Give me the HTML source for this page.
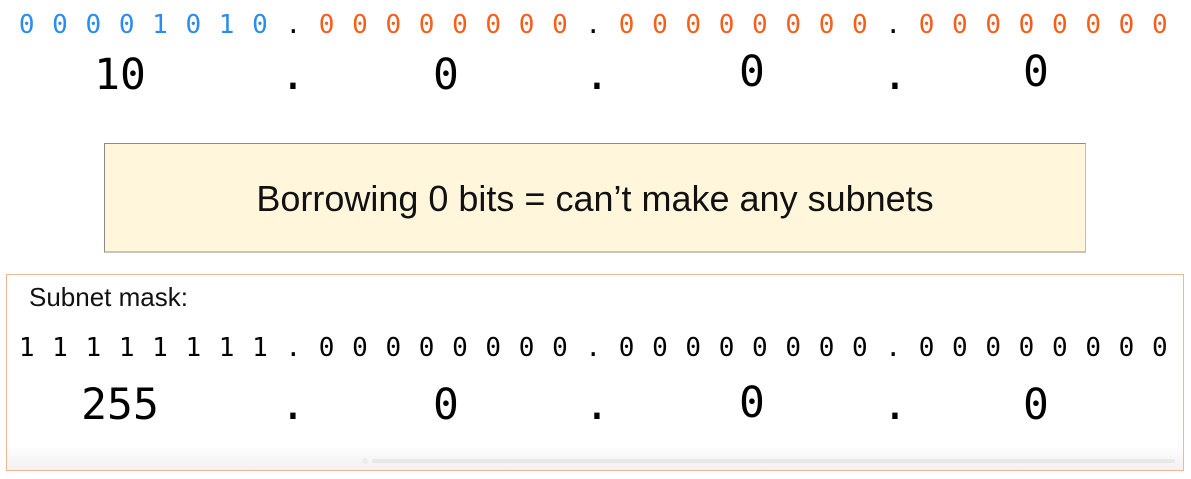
<!DOCTYPE html>
<html><head><meta charset="utf-8"><style>
body{margin:0;width:1191px;height:479px;background:#fff;position:relative;overflow:hidden;font-family:"DejaVu Sans Mono","Liberation Mono",monospace}
.row{position:absolute;left:10px;display:flex}
.row span{width:33.33px;text-align:center;display:block}
.b{color:#2a8cf0}.o{color:#f4601a}
.abs{position:absolute;transform:translateX(-50%)}
.yel{position:absolute;left:104px;top:143px;width:980px;height:107px;background:#fff6dc;border:1px solid #8a8a8a;border-right-color:#bbb;border-bottom:2px solid #c8c4b8;font-family:"Liberation Sans",sans-serif;font-size:36px;text-align:center;line-height:109px;color:#111}
.mask{position:absolute;left:6px;top:274px;width:1176px;height:195px;border:1.5px solid #f3b596;background:linear-gradient(#fff 0,#fff 170px,#f1f1f1 195px)}
</style></head><body>
<div class="row" style="top:9px;font-size:26px;line-height:32px">
<span class="b">0</span><span class="b">0</span><span class="b">0</span><span class="b">0</span><span class="b">1</span><span class="b">0</span><span class="b">1</span><span class="b">0</span><span>.</span><span class="o">0</span><span class="o">0</span><span class="o">0</span><span class="o">0</span><span class="o">0</span><span class="o">0</span><span class="o">0</span><span class="o">0</span><span>.</span><span class="o">0</span><span class="o">0</span><span class="o">0</span><span class="o">0</span><span class="o">0</span><span class="o">0</span><span class="o">0</span><span class="o">0</span><span>.</span><span class="o">0</span><span class="o">0</span><span class="o">0</span><span class="o">0</span><span class="o">0</span><span class="o">0</span><span class="o">0</span><span class="o">0</span>
</div>
<div style="position:absolute;top:51px;left:0;width:1191px;font-size:43px;line-height:48px;color:#000">
<span class="abs" style="left:120px">10</span><span class="abs" style="left:293px">.</span><span class="abs" style="left:446px">0</span><span class="abs" style="left:597px">.</span><span class="abs" style="left:752px;top:-3px">0</span><span class="abs" style="left:895px">.</span><span class="abs" style="left:1036px;top:-3px">0</span>
</div>
<div class="yel">Borrowing 0 bits = can’t make any subnets</div>
<div class="mask"></div>
<div style="position:absolute;left:29px;top:282px;font-family:'Liberation Sans',sans-serif;font-size:26px;color:#111">Subnet mask:</div>
<div class="row" style="top:332px;font-size:26px;line-height:32px;color:#000">
<span>1</span><span>1</span><span>1</span><span>1</span><span>1</span><span>1</span><span>1</span><span>1</span><span>.</span><span>0</span><span>0</span><span>0</span><span>0</span><span>0</span><span>0</span><span>0</span><span>0</span><span>.</span><span>0</span><span>0</span><span>0</span><span>0</span><span>0</span><span>0</span><span>0</span><span>0</span><span>.</span><span>0</span><span>0</span><span>0</span><span>0</span><span>0</span><span>0</span><span>0</span><span>0</span>
</div>
<div style="position:absolute;top:381px;left:0;width:1191px;font-size:43px;line-height:48px;color:#000">
<span class="abs" style="left:120px">255</span><span class="abs" style="left:293px">.</span><span class="abs" style="left:446px">0</span><span class="abs" style="left:597px">.</span><span class="abs" style="left:752px;top:-2px">0</span><span class="abs" style="left:895px">.</span><span class="abs" style="left:1036px">0</span>
</div>
<div style="position:absolute;left:362px;top:458px;width:6px;height:6px;border-radius:3px;background:#ececec"></div>
<div style="position:absolute;left:372px;top:459px;width:803px;height:4px;border-radius:2px;background:#e8e8e8"></div>
</body></html>
